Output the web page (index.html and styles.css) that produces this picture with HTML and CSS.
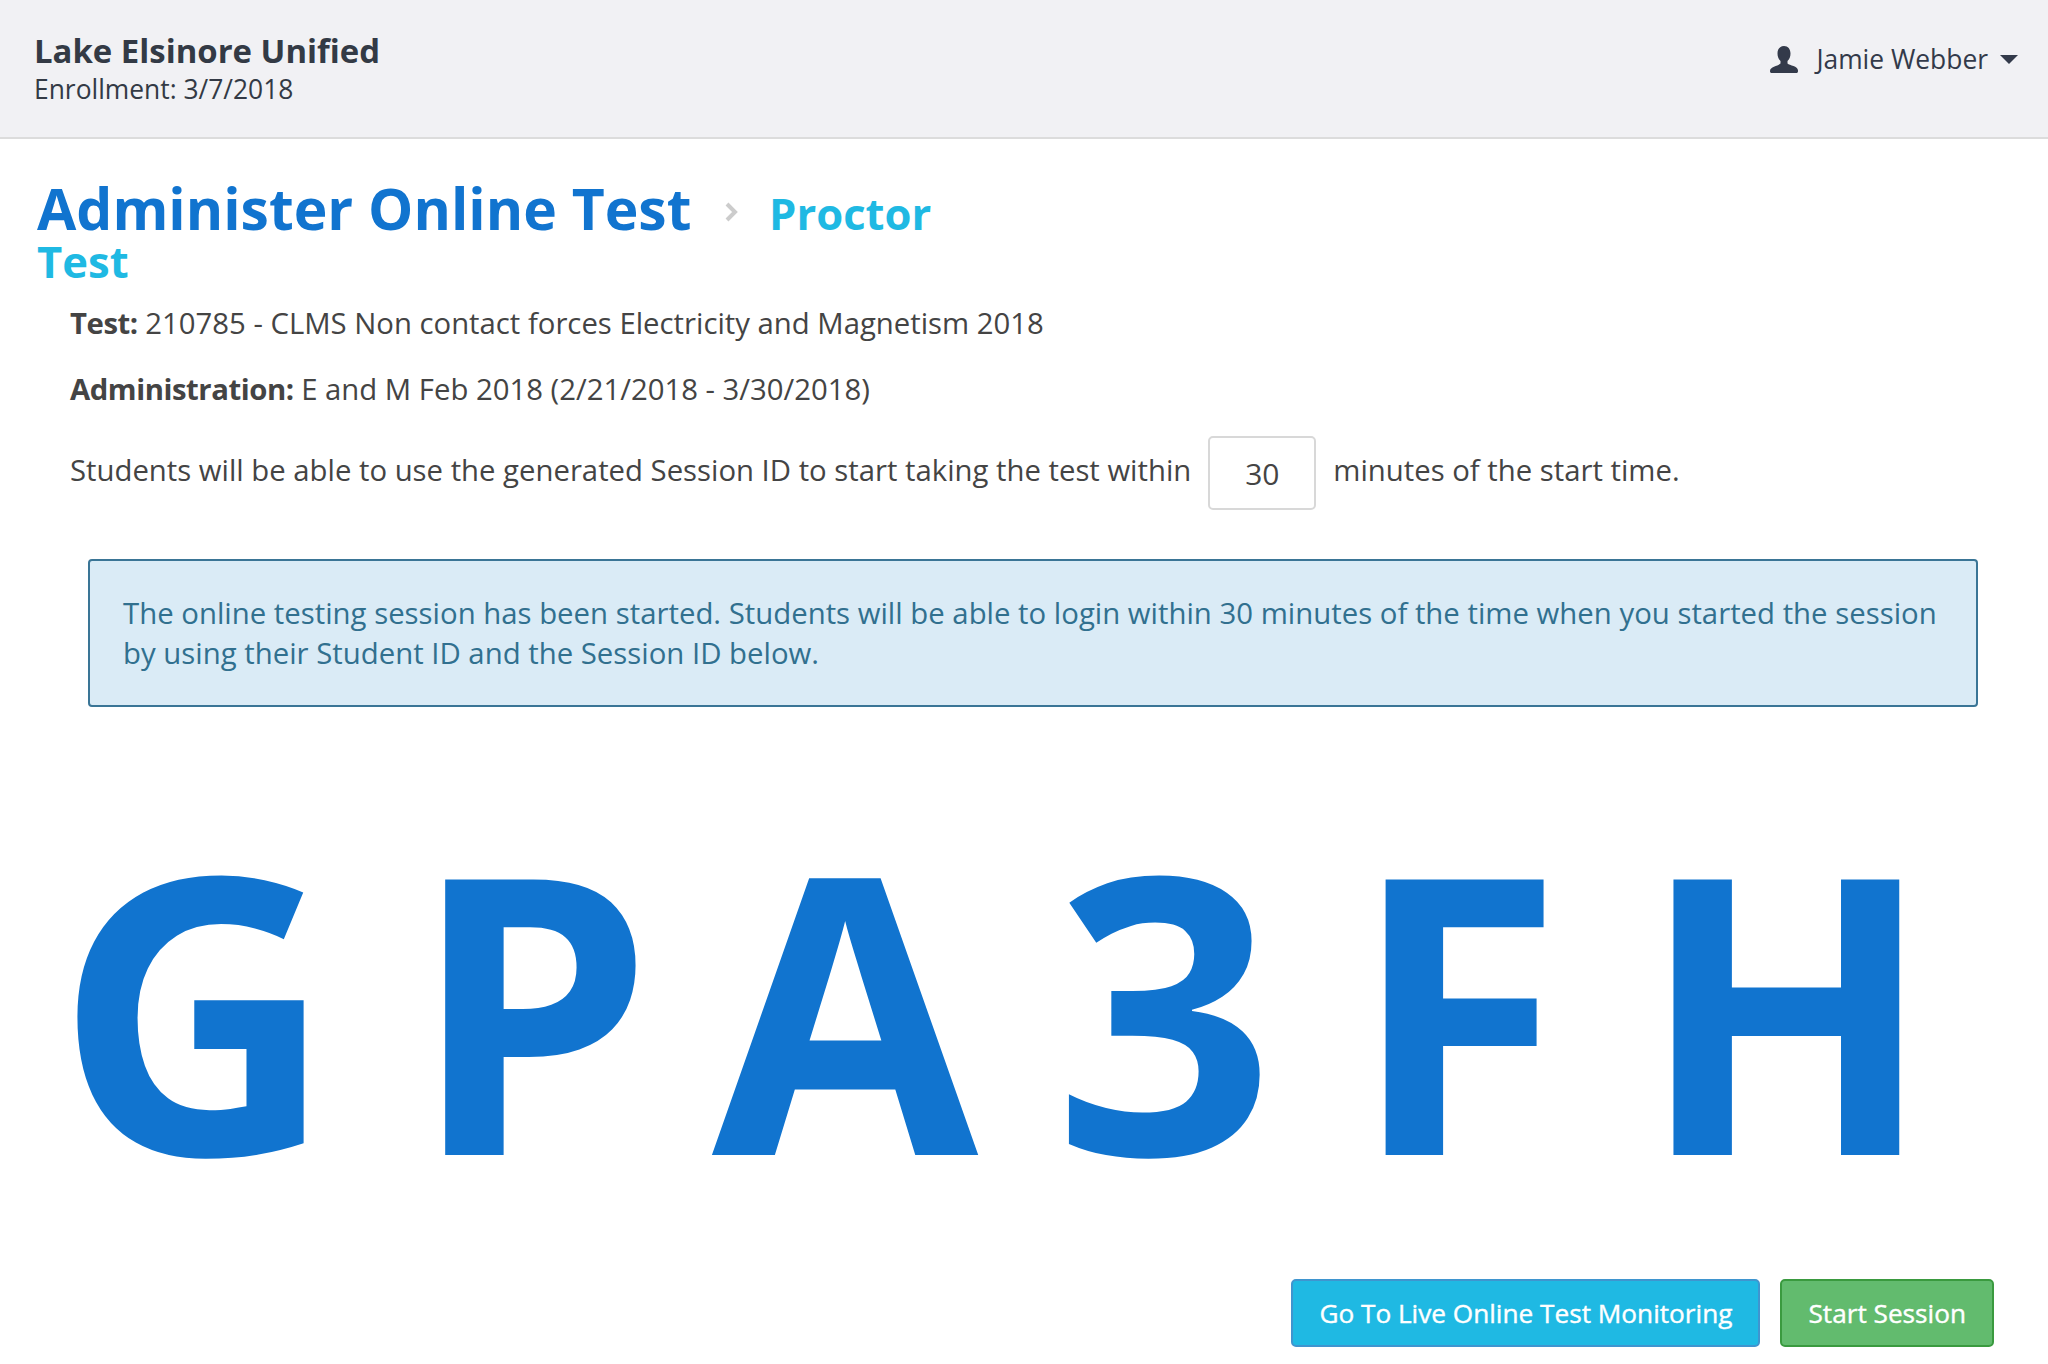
FILE: index.html
```html
<!DOCTYPE html>
<html lang="en">
<head>
  <meta charset="UTF-8" />
  <title>Administer Online Test</title>
  <link rel="stylesheet" href="styles.css">
</head>
<body>
  <header class="topbar">
    <div class="district">
      <div class="district-name">Lake Elsinore Unified</div>
      <div class="enrollment">Enrollment: 3/7/2018</div>
    </div>
    <div class="user">
      <svg class="user-icon" viewBox="0 0 28 27" width="28" height="27">
        <path d="M14 0c4 0 6.500 3 6.500 7.500 0 3-1 5.500-3 7.500v2.500c2 2 10.500 2.500 10.500 7v.5c0 1.500-.5 2-2 2H2c-1.500 0-2-.5-2-2V25c0-4.500 8.500-5 10.500-7.500V15c-2-2-3-4.500-3-7.500C7.500 3 10 0 14 0z" fill="#333a4a"/>
      </svg>
      <span>Jamie Webber</span>
      <span class="caret"></span>
    </div>
  </header>

  <main class="content">
    <h1 class="page-title">
      <span class="title-main">Administer Online Test</span>
      <svg class="crumb-sep" viewBox="0 0 15 20" width="15" height="20">
        <path d="M3 2l8 8-8 8" fill="none" stroke="#cccccc" stroke-width="4"/>
      </svg>
      <span class="crumb">Proctor Test</span>
    </h1>

    <div class="details">
      <p class="detail"><b>Test:</b> 210785 - CLMS Non contact forces Electricity and Magnetism 2018</p>
      <p class="detail"><b>Administration:</b> E and M Feb 2018 (2/21/2018 - 3/30/2018)</p>
      <p class="detail window-row">
        Students will be able to use the generated Session ID to start taking the test within
        <input class="minutes" type="text" value="30" />
        minutes of the start time.
      </p>
    </div>

    <div class="notice">
      The online testing session has been started. Students will be able to login within 30 minutes of the time when you started the session by using their Student ID and the Session ID below.
    </div>

    <div class="session-id">G<span class="kern-pa">P</span>A3FH</div>

    <div class="actions">
      <button class="btn btn-monitor">Go To Live Online Test Monitoring</button>
      <button class="btn btn-start">Start Session</button>
    </div>
  </main>
</body>
</html>
```

FILE: styles.css
```css
body {
  margin: 0;
  font-family: "Open Sans", sans-serif;
  background: #fff;
  color: #444;
}
.topbar {
  display: flex;
  justify-content: space-between;
  align-items: flex-start;
  height: 137px;
  background: #f1f1f4;
  border-bottom: 2px solid #dcdcdc;
  padding: 0 30px 0 34px;
}
.district {
  padding-top: 30px;
}
.district-name {
  font-size: 32.9px;
  line-height: 42px;
  font-weight: 700;
  color: #333a45;
}
.enrollment {
  font-size: 26.4px;
  line-height: 34px;
  color: #333a45;
}
.user {
  display: flex;
  align-items: center;
  gap: 18px;
  padding-top: 39px;
  font-size: 26.4px;
  line-height: 40px;
  color: #333a4a;
}
.caret {
  width: 0;
  height: 0;
  border-left: 9px solid transparent;
  border-right: 9px solid transparent;
  border-top: 9px solid #333a4a;
  margin-left: -6px;
}
.content {
  padding: 0 54px 0 37px;
}
.page-title {
  margin: 48px 0 0;
  font-size: 57px;
  line-height: 43px;
  font-weight: 700;
  color: #1174cf;
  width: 960px;
}
.crumb-sep {
  vertical-align: 8px;
  margin: 0 15px 0 18px;
}
.crumb {
  font-size: 43.6px;
  font-weight: 700;
  color: #1fb9e3;
}
.details {
  padding-left: 33px;
  margin-top: 22px;
}
.detail {
  margin: 0 0 30px;
  font-size: 29.3px;
  line-height: 36px;
}
.detail b {
  font-weight: 700;
  letter-spacing: -0.45px;
}
.window-row {
  display: flex;
  align-items: center;
  gap: 17px;
  margin-top: -4px;
}
.minutes {
  width: 108px;
  height: 74px;
  margin: 3px 0 -3px;
  box-sizing: border-box;
  border: 2px solid #d8d8d8;
  border-radius: 5px;
  text-align: center;
  font-family: "Open Sans", sans-serif;
  font-size: 30px;
  color: #444;
}
.notice {
  margin: 52px 0 0 51px;
  width: 1890px;
  box-sizing: border-box;
  padding: 33px 33px;
  height: 148px;
  background: #daebf6;
  border: 2px solid #3a7596;
  border-radius: 4px;
  font-size: 29.35px;
  line-height: 39.5px;
  color: #31708f;
}
.session-id {
  margin-top: 98px;
  font-size: 386px;
  line-height: 400px;
  font-weight: 700;
  color: #1174cf;
  letter-spacing: 76px;
  white-space: nowrap;
  padding-left: 18px;
}
.kern-pa {
  letter-spacing: 59px;
}
.actions {
  display: flex;
  justify-content: flex-end;
  gap: 20px;
  margin-top: 74px;
}
.btn {
  height: 68px;
  padding: 0 26px;
  border-radius: 5px;
  font-family: "Open Sans", sans-serif;
  font-size: 26.2px;
  font-weight: 400;
  -webkit-text-stroke: 0.4px #fff;
  color: #fff;
  border: 2px solid;
}
.btn-monitor {
  background: #1fb9e3;
  border-color: #3f95cf;
}
.btn-start {
  background: #62bb6e;
  border-color: #3a9a3f;
}
```
